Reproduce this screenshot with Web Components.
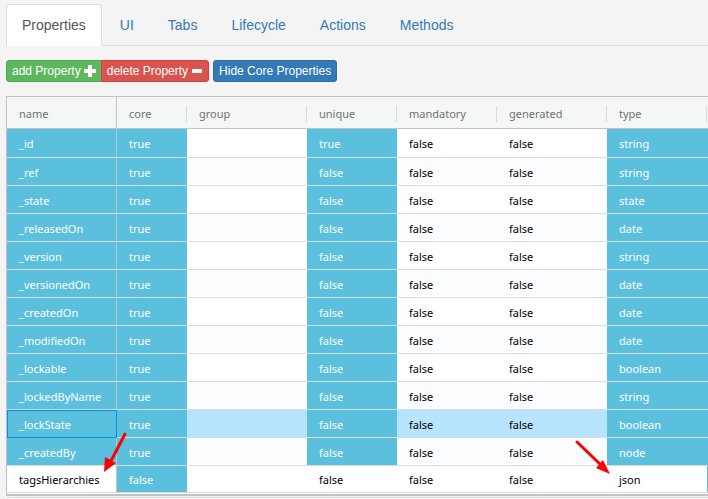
<!DOCTYPE html>
<html lang="en">
<head>
<meta charset="utf-8">
<title>Properties</title>
<style>
html, body { margin: 0; background: #f4f4f4; }
body { font-family: "Liberation Sans", Arial, sans-serif; font-size: 14px; line-height: 20px; color: #333; overflow: hidden; }
</style>
</head>
<body>
<schema-page>
  <tab-bar>
    <nav-tab active>Properties</nav-tab>
    <nav-tab>UI</nav-tab>
    <nav-tab>Tabs</nav-tab>
    <nav-tab>Lifecycle</nav-tab>
    <nav-tab>Actions</nav-tab>
    <nav-tab>Methods</nav-tab>
  </tab-bar>
  <tool-bar>
    <button-group>
      <action-button kind="success" icon="plus">add Property</action-button>
      <action-button kind="danger" icon="minus">delete Property</action-button>
    </button-group>
    <action-button kind="primary">Hide Core Properties</action-button>
  </tool-bar>
  <property-grid></property-grid>
  <next-panel></next-panel>
</schema-page>
<script>
class Base extends HTMLElement {
  constructor() {
    super();
    this.attachShadow({ mode: "open" });
  }
  connectedCallback() {
    this.shadowRoot.innerHTML = this.render();
  }
}

customElements.define("schema-page", class extends Base {
  render() {
    return `<style>:host { display: block; padding: 4px 0 0 6px; }</style><slot></slot>`;
  }
});

customElements.define("tab-bar", class extends Base {
  render() {
    return `<style>
      :host { display: block; }
      nav { display: flex; gap: 2px; border-bottom: 1px solid #ddd; }
    </style><nav><slot></slot></nav>`;
  }
});

customElements.define("nav-tab", class extends Base {
  render() {
    return `<style>
      :host { display: block; margin-bottom: -1px; }
      a { display: block; padding: 10px 15px; border: 1px solid transparent; border-radius: 4px 4px 0 0; color: #337ab7; text-decoration: none; }
      :host([active]) a { color: #555; background: #fff; border-color: #ddd #ddd #fff; }
    </style><a href="#"><slot></slot></a>`;
  }
});

customElements.define("tool-bar", class extends Base {
  render() {
    return `<style>:host { display: flex; gap: 4px; padding: 14px 0; }</style><slot></slot>`;
  }
});

customElements.define("button-group", class extends Base {
  render() {
    return `<style>
      :host { display: flex; }
      ::slotted(:first-child) { --radius: 3px 0 0 3px; }
      ::slotted(:last-child) { --radius: 0 3px 3px 0; margin-left: -1px; }
    </style><slot></slot>`;
  }
});

const icons = {
  plus: `<svg width="12" height="12" viewBox="0 0 12 12" aria-hidden="true"><path d="M4.5 0h3q.5 0 .5.5V4h3.5q.5 0 .5.5v3q0 .5-.5.5H8v3.5q0 .5-.5.5h-3q-.5 0-.5-.5V8H.5Q0 8 0 7.500v-3Q0 4 .5 4H4V.5Q4 0 4.500 0z" fill="#fff"/></svg>`,
  minus: `<svg width="12" height="12" viewBox="0 0 12 12" aria-hidden="true"><rect x="1" y="4" width="10" height="4" rx="1" fill="#fff"/></svg>`
};

customElements.define("action-button", class extends Base {
  render() {
    return `<style>
      :host { display: block; }
      button { display: flex; align-items: center; gap: 3px; margin: 0; padding: 1px 5px; border: 1px solid; border-radius: var(--radius, 3px); font: 12px/18px "Liberation Sans", Arial, sans-serif; color: #fff; white-space: nowrap; }
      svg { display: block; }
      :host([kind="success"]) button { background: #5cb85c; border-color: #4cae4c; }
      :host([kind="danger"]) button { background: #d9534f; border-color: #d43f3a; }
      :host([kind="primary"]) button { background: #337ab7; border-color: #2e6da4; }
    </style><button type="button"><slot></slot>${icons[this.getAttribute("icon")] || ""}</button>`;
  }
});

const columns = [["name", 110], ["core", 70], ["group", 120], ["unique", 90], ["mandatory", 100], ["generated", 110], ["type", 100]];
const records = [
  ["_id", "true", "string"],
  ["_ref", "false", "string"],
  ["_state", "false", "state"],
  ["_releasedOn", "false", "date"],
  ["_version", "false", "string"],
  ["_versionedOn", "false", "date"],
  ["_createdOn", "false", "date"],
  ["_modifiedOn", "false", "date"],
  ["_lockable", "false", "boolean"],
  ["_lockedByName", "false", "string"],
  ["_lockState", "false", "boolean"],
  ["_createdBy", "false", "node"],
  ["tagsHierarchies", "false", "json"]
];

customElements.define("property-grid", class extends Base {
  render() {
    const rows = records.map(([name, unique, type]) => {
      const own = name === "tagsHierarchies";
      const fixed = own ? "" : "fixed";
      const selected = name === "_lockState";
      return `<tr class="${selected ? "selected" : ""}">
        <td class="pinned ${fixed} ${selected ? "focus" : ""}">${name}</td>
        <td class="fixed">${own ? "false" : "true"}</td><td></td>
        <td class="${fixed}">${unique}</td><td>false</td><td>false</td>
        <td class="${fixed}">${type}</td><td class="fixed"></td></tr>`;
    }).join("");
    return `<style>
      :host { display: block; position: relative; border: solid #bdc3c7; border-width: 1px 0 2px 1px; background: #fff; padding-bottom: 1px; }
      table { width: 100%; table-layout: fixed; border-collapse: separate; border-spacing: 0; font: 11px/16px "Noto Sans", "Open Sans", sans-serif; color: #000; }
      th, td { box-sizing: border-box; padding: 2px 0 0 12px; text-align: left; white-space: nowrap; overflow: hidden; }
      th { height: 32px; padding: 2px 0 0; background: #f5f7f7; color: #6d7273; font-weight: 400; border-bottom: 1px solid #bdc3c7; }
      th span { display: block; padding-left: 12px; border-right: 1px solid #d9dcde; }
      th.pinned span { border: 0; }
      td { height: 28px; border-bottom: 1px solid #d9dcde; background-clip: padding-box; }
      tbody tr:first-child td { height: 29px; }
      tbody tr:last-child td { height: 27px; }
      tbody tr:nth-child(even) { background: #fcfdfe; }
      tbody tr.selected { background: #b7e4ff; }
      td.fixed { background-color: #5bc0de; color: #fff; }
      .pinned { border-right: 1px solid #bdc3c7; }
      td.focus { outline: 1px solid #0091ea; outline-offset: -1px; }
      svg { position: absolute; overflow: visible; pointer-events: none; }
      .left { left: 97px; top: 335px; }
      .right { left: 568px; top: 343px; }
    </style>
    <table>
      <colgroup>${columns.map(c => `<col style="width:${c[1]}px">`).join("")}<col></colgroup>
      <thead><tr>${columns.map((c, i) => `<th class="${i ? "" : "pinned"}"><span>${c[0]}</span></th>`).join("")}<th></th></tr></thead>
      <tbody>${rows}</tbody>
    </table>
    <svg class="left" width="22" height="42" viewBox="0 0 22 42" aria-hidden="true"><path d="M21 2L7 29" stroke="#f00" stroke-width="3" stroke-linecap="round"/><path d="M0 40L1 25L5 27L8 29L12 31Z" fill="#f00"/></svg>
    <svg class="right" width="36" height="34" viewBox="0 0 36 34" aria-hidden="true"><path d="M2 2L26 25" stroke="#f00" stroke-width="3" stroke-linecap="round"/><path d="M35 34L21 28L28 20Z" fill="#f00"/></svg>`;
  }
});

customElements.define("next-panel", class extends Base {
  render() {
    return `<style>:host { display: block; height: 20px; margin-top: 1px; border: 1px solid #ddd; border-right: 0; border-radius: 4px 0 0 0; background: #f5f5f5; }</style>`;
  }
});
</script>
</body>
</html>
